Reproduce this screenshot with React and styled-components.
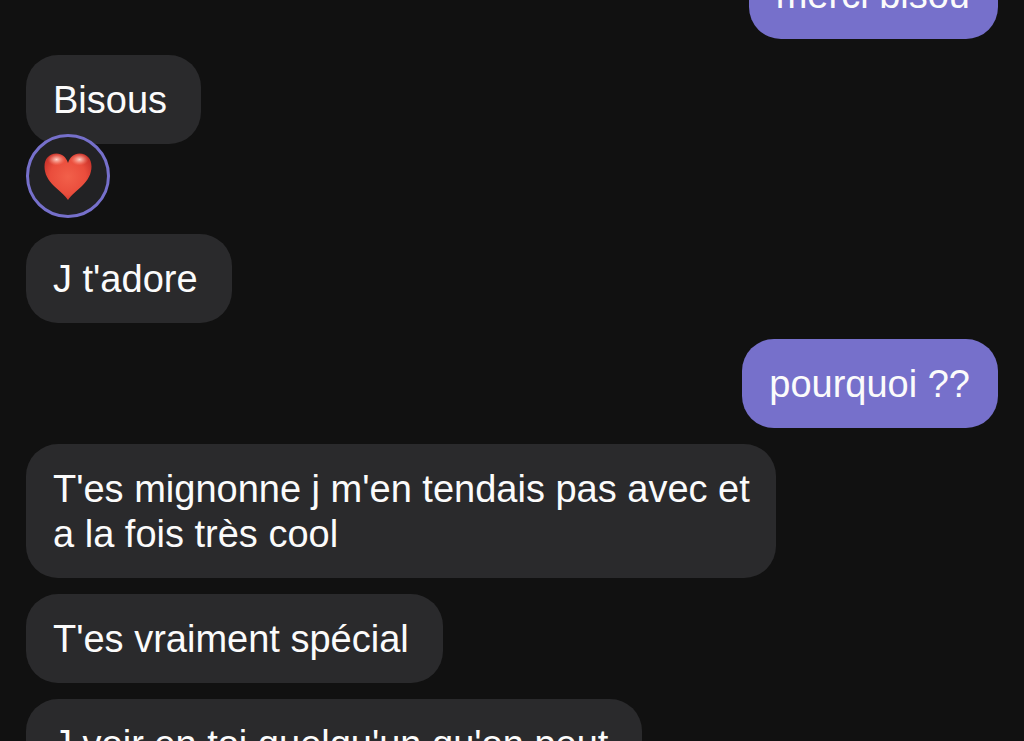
import styled, { createGlobalStyle } from "styled-components";

const GlobalStyle = createGlobalStyle`
  * {
    box-sizing: border-box;
  }

  body {
    margin: 0;
    background: #111111;
  }
`;

const Screen = styled.main`
  display: flex;
  flex-direction: column;
  justify-content: flex-end;
  height: 100vh;
  overflow: hidden;
`;

const Thread = styled.div`
  display: flex;
  flex-direction: column;
  gap: 16px;
  margin-bottom: -47px;
  padding: 0 26px;
`;

const Message = styled.div`
  display: flex;
  flex-direction: column;
  align-items: ${({ $mine }) => ($mine ? "flex-end" : "flex-start")};
`;

const Bubble = styled.p`
  margin: 0;
  padding: 23px 27px 21px;
  padding-right: ${({ $mine, $long }) => ($mine ? "28px" : $long ? "24px" : "34px")};
  max-width: 750px;
  border-radius: 32px;
  background: ${({ $mine }) => ($mine ? "#7670cb" : "#2a2a2c")};
  color: #fbfbfb;
  font-family: "Liberation Sans", Arial, sans-serif;
  font-size: 38px;
  line-height: 45px;
`;

const Reaction = styled.div`
  display: grid;
  place-items: center;
  width: 84px;
  height: 84px;
  margin-top: -10px;
  border: 3px solid #7670cb;
  border-radius: 50%;
  background: #222224;
`;

function Heart() {
  return (
    <svg width="50" height="50" viewBox="0 0 50 50" role="img" aria-label="coeur">
      <defs>
        <radialGradient id="heartFill" cx="0.5" cy="0.5" r="0.58">
          <stop offset="0" stopColor="#f2604a" />
          <stop offset="0.65" stopColor="#ea4d3c" />
          <stop offset="1" stopColor="#c9332b" />
        </radialGradient>
        <radialGradient id="heartShine">
          <stop offset="0" stopColor="#ffe3da" stopOpacity="0.9" />
          <stop offset="0.5" stopColor="#ffb5a5" stopOpacity="0.5" />
          <stop offset="1" stopColor="#ff8a75" stopOpacity="0" />
        </radialGradient>
      </defs>
      <path
        d="M25 12C23 6 19 2.500 13.500 2.500C6 2.500 1.500 8 1.500 15.500C1.500 23 5 29 11 35C16 40 22 44 25 49C28 44 34 40 39 35C45 29 48.500 23 48.500 15.500C48.500 8 44 2.500 36.500 2.500C31 2.500 27 6 25 12Z"
        fill="url(#heartFill)"
      />
      <ellipse cx="13.500" cy="8.500" rx="9" ry="6" fill="url(#heartShine)" />
      <ellipse cx="36.500" cy="8.500" rx="9" ry="6" fill="url(#heartShine)" />
    </svg>
  );
}

const messages = [
  { text: "merci bisou", mine: true },
  { text: "Bisous", heart: true },
  { text: "J t'adore" },
  { text: "pourquoi ??", mine: true },
  { text: "T'es mignonne j m'en tendais pas avec et a la fois très cool", long: true },
  { text: "T'es vraiment spécial" },
  { text: "J voir en toi quelqu'un qu'on peut" },
];

export default function App() {
  return (
    <>
      <GlobalStyle />
      <Screen>
        <Thread>
          {messages.map(({ text, mine, long, heart }) => (
            <Message key={text} $mine={mine}>
              <Bubble $mine={mine} $long={long}>
                {text}
              </Bubble>
              {heart && (
                <Reaction>
                  <Heart />
                </Reaction>
              )}
            </Message>
          ))}
        </Thread>
      </Screen>
    </>
  );
}
